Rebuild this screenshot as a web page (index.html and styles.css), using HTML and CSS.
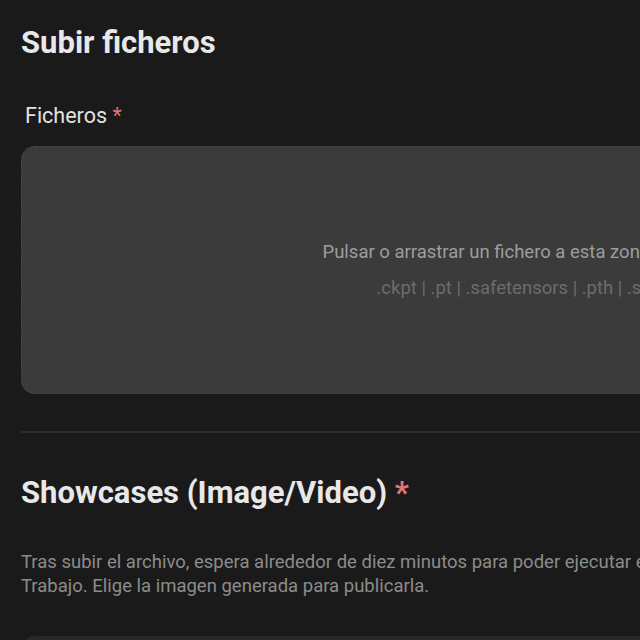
FILE: index.html
```html
<!DOCTYPE html>
<html lang="es">
<head>
  <meta charset="UTF-8">
  <title>Subir ficheros</title>
  <link rel="stylesheet" href="styles.css">
</head>
<body>

  <div class="page">
    <h2 class="section-title">Subir ficheros</h2>

    <div class="field">
      <label class="field-label">Ficheros <span class="required">*</span></label>
      <div class="dropzone">
        <p class="dropzone-text">Pulsar o arrastrar un fichero a esta zona para subirlo</p>
        <p class="dropzone-hint">.ckpt | .pt | .safetensors | .pth | .sft | .bin</p>
      </div>
    </div>

    <hr class="divider">

    <h2 class="section-title showcase-title">Showcases (Image/Video) <span class="required">*</span></h2>
    <p class="description">
      Tras subir el archivo, espera alrededor de diez minutos para poder ejecutar el modelo en la sección de<br>
      Trabajo. Elige la imagen generada para publicarla.
    </p>

    <div class="showcase-box"></div>
  </div>

</body>
</html>
```

FILE: styles.css
```css
body {
  font-family: Roboto, 'Noto Sans', sans-serif;
  margin: 0;
  padding: 0;
  background-color: #1a1a1a;
  color: #e6e6e6;
  overflow: hidden;
}

.page {
  width: 1032px;
  padding: 0 21px;
}

.section-title {
  font-size: 31px;
  font-weight: 700;
  line-height: 36px;
  margin: 25px 0 0;
  color: #e8e8e8;
}

.field {
  margin-top: 42px;
}

.field-label {
  display: block;
  font-size: 21.5px;
  line-height: 26px;
  margin-left: 4px;
  color: #e2e2e2;
}

.required {
  color: #e57373;
}

.dropzone {
  margin-top: 17px;
  height: 246px;
  background-color: #3b3b3b;
  border: 1px dashed #454545;
  border-radius: 14px;
  display: flex;
  flex-direction: column;
  align-items: center;
  justify-content: center;
}

.dropzone p {
  margin: 0;
  font-size: 18.5px;
}

.dropzone-text {
  color: #9d9d9d;
  line-height: 24px;
  margin-top: 4px;
}

.dropzone-hint {
  color: #6c6c6c;
  line-height: 24px;
  margin-top: 12px !important;
}

.divider {
  border: none;
  border-top: 2px solid #2c2c2c;
  margin: 37px 0 0;
}

.showcase-title {
  margin-top: 42px;
}

.description {
  font-size: 18.5px;
  line-height: 24px;
  color: #8c8c8c;
  margin: 39px 0 0;
}

.showcase-box {
  margin-top: 38px;
  height: 200px;
  background-color: #282828;
  border-radius: 14px;
}
```
